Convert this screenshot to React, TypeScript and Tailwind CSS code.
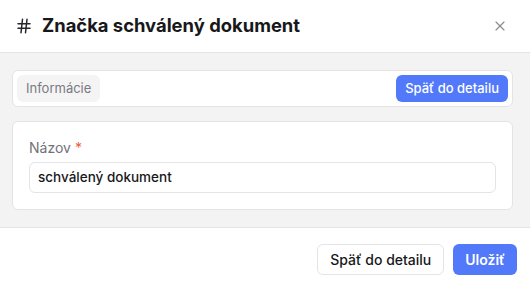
import React from 'react';
import { Hash, X } from 'lucide-react';

const App: React.FC = () => {
  return (
    <div
      className="w-[530px] h-[285px] flex flex-col bg-white overflow-hidden text-[#18181b]"
      style={{ fontFamily: 'Inter, "Noto Sans", sans-serif' }}
    >
      {/* Header */}
      <div className="h-[53px] shrink-0 flex items-center justify-between pl-[15px] pr-[22px] border-b border-[#e4e4e7]">
        <div className="flex items-center gap-[9px]">
          <Hash size={18} strokeWidth={2} className="text-[#27272a]" />
          <h2 className="text-[18.4px] font-bold">Značka schválený dokument</h2>
        </div>
        <button className="text-[#8a8a90]">
          <X size={16} strokeWidth={1.75} />
        </button>
      </div>

      {/* Body */}
      <div className="flex-1 bg-[#f3f3f4] pl-3 pr-[17px] pt-[17px] flex flex-col gap-[14px]">
        <div className="bg-white border border-[#e4e4e7] rounded-md p-1 flex items-center justify-between">
          <div className="h-[27px] px-[9px] rounded-md bg-[#f4f4f5] text-[#7a7a82] text-[13px] flex items-center">
            Informácie
          </div>
          <button className="h-[27px] px-[9px] rounded-md bg-[#5179fa] text-white text-[13px] font-medium flex items-center">
            Späť do detailu
          </button>
        </div>

        <div className="bg-white border border-[#e4e4e7] rounded-md p-4 flex flex-col gap-1">
          <label className="text-sm text-[#71717a] leading-5">
            Názov <span className="text-[#e8603c]">*</span>
          </label>
          <div className="h-[31px] border border-[#e4e4e7] rounded-md px-2 flex items-center text-[13.5px] font-medium text-[#18181b]">
            schválený dokument
          </div>
        </div>
      </div>

      {/* Footer */}
      <div className="h-[58px] shrink-0 border-t border-[#e4e4e7] bg-white flex justify-end items-start gap-[9px] pt-4 pr-[13px]">
        <button className="h-[31px] px-3 rounded-md border border-[#e4e4e7] bg-white text-sm font-medium text-[#18181b]">
          Späť do detailu
        </button>
        <button className="h-[31px] px-3 rounded-md bg-[#5179fa] text-white text-sm font-semibold">
          Uložiť
        </button>
      </div>
    </div>
  );
};

export default App;
